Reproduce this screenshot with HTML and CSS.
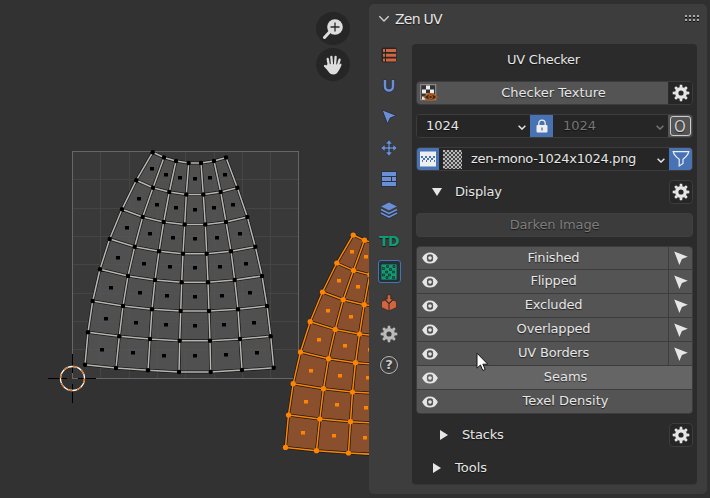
FILE: index.html
```html
<!DOCTYPE html>
<html lang="en">
<head>
<meta charset="utf-8">
<title>Zen UV</title>
<link rel="stylesheet" href="styles.css">
</head>
<body>
<svg class="defs" width="0" height="0">
  <defs>
    <symbol id="gear" viewBox="-10 -10 20 20">
      <g fill="currentColor">
        <path fill-rule="evenodd" d="M0-6A6 6 0 1 1 0 6A6 6 0 1 1 0-6ZM0-2.6A2.6 2.6 0 1 0 0 2.6A2.6 2.6 0 1 0 0-2.6Z"/>
        <path id="tooth" d="M-1.5-5.500L-1.2-8.3H1.2L1.5-5.500Z"/>
        <use href="#tooth" transform="rotate(45)"/><use href="#tooth" transform="rotate(90)"/>
        <use href="#tooth" transform="rotate(135)"/><use href="#tooth" transform="rotate(180)"/>
        <use href="#tooth" transform="rotate(225)"/><use href="#tooth" transform="rotate(270)"/>
        <use href="#tooth" transform="rotate(315)"/>
      </g>
    </symbol>
    <symbol id="eye" viewBox="0 0 16 12">
      <path fill="none" stroke="currentColor" stroke-width="1.8" d="M1.200 6C3 2.500 5.300 1.300 8 1.300S13 2.500 14.800 6C13 9.500 10.700 10.700 8 10.700S3 9.500 1.200 6Z"/>
      <path fill="currentColor" d="M3.800 2.500L5.500 2L4.800 6L5.500 10L3.800 9.500L1 6ZM12.200 2.500L10.500 2L11.200 6L10.500 10L12.200 9.500L15 6Z"/>
      <circle cx="8" cy="6" r="1.800" fill="currentColor"/>
    </symbol>
    <symbol id="arrow" viewBox="0 0 14 14"><path fill="currentColor" d="M.2.400L13.800 5.700L7.900 8L5.400 13.900Z"/></symbol>
    <symbol id="chev" viewBox="0 0 8 5"><path fill="none" stroke="currentColor" stroke-width="1.400" d="M.6.7L4 4.100L7.400.7"/></symbol>
  </defs>
</svg>
<div class="app">
  <main class="editor">
    <svg class="canvas" id="uv" width="369" height="498" viewBox="0 0 369 498"></svg>
    <div class="tools">
      <span class="tool"><svg width="20" height="20" viewBox="0 0 20 20"><path d="M1.500 18.500L7 12.500" stroke="#ddd" stroke-width="3" stroke-linecap="round"/><circle cx="12" cy="8" r="7.800" fill="#ddd"/><path d="M12 3.500V12.500M7.500 8H16.500" stroke="#282828" stroke-width="1.300"/></svg></span>
      <span class="tool"><svg width="20" height="20" viewBox="0 0 20 20"><g fill="none" stroke="#ddd" stroke-linecap="round" stroke-width="2.300"><path d="M6 11L4.700 4M9 10L8.400 2M12 10L12.600 2M14.700 11L16.600 4.700M6.500 15.500L2 11"/></g><path fill="#ddd" d="M4.900 9L15.800 9.500L18 8.500C19.500 9.500 17 13.500 15.500 16Q13.500 19.500 10.500 19.500Q7 19.500 5 16L2 11.500Z"/></svg></span>
    </div>
  </main>
  <aside class="sidebar">
    <header class="head">
      <svg class="fold" width="12" height="8" viewBox="0 0 12 8"><path d="M1.300 1.200L6 6L10.700 1.200" fill="none" stroke="#ccc" stroke-width="1.400"/></svg>
      <span class="head-title">Zen UV</span>
      <svg class="grip" width="15" height="8" viewBox="0 0 15 8"><g fill="#111"><path d="M0 2h2v1h-2zM4 2h2v1h-2zM8 2h2v1h-2zM12 2h2v1h-2zM0 6h2v1h-2zM4 6h2v1h-2zM8 6h2v1h-2zM12 6h2v1h-2z"/></g><path fill="#aaa" d="M0 0h2v2h-2zM4 0h2v2h-2zM8 0h2v2h-2zM12 0h2v2h-2zM0 4h2v2h-2zM4 4h2v2h-2zM8 4h2v2h-2zM12 4h2v2h-2z"/></svg>
    </header>
    <div class="content">
      <nav class="tabs">
        <span class="tab"><svg width="18" height="18" viewBox="0 0 18 18"><rect x="1.500" y="1.500" width="15" height="15" rx="2" fill="#262626"/><path fill="#d0653f" d="M3 3h2v3h-2zM6 3h10v3h-10zM3 7.700h2v3h-2zM6 7.700h10v3h-10zM3 12.500h2v3h-2zM6 12.500h10v3h-10z"/></svg></span>
        <span class="tab"><svg width="18" height="18" viewBox="0 0 18 18"><path d="M5 2.500V9.500A4 4 0 0 0 13 9.500V2.500" fill="none" stroke="#2b303a" stroke-width="4.300"/><path d="M5 3V9.500A4 4 0 0 0 13 9.500V3" fill="none" stroke="#6b8fd6" stroke-width="2.500"/></svg></span>
        <span class="tab"><svg width="18" height="18" viewBox="0 0 18 18"><path d="M2 1.800L16.500 7.500L10.300 10L7.500 16Z" fill="#6b8fd6" stroke="#2b303a"/></svg></span>
        <span class="tab"><svg width="18" height="18" viewBox="0 0 18 18"><g stroke="#2b303a" stroke-width=".7" fill="#6b8fd6"><path d="M9 .8L12.500 5H10V8H13V5.500L17.200 9L13 12.500V10H10V13H12.500L9 17.200L5.500 13H8V10H5V12.500L.8 9L5 5.500V8H8V5H5.500Z"/></g></svg></span>
        <span class="tab"><svg width="18" height="18" viewBox="0 0 18 18"><rect x="1" y="1" width="16" height="16" rx="1" fill="#2b303a"/><path fill="#6b8fd6" d="M2 2h14v4h-14zM2 7h9v4h-9zM12 7h4v4h-4zM2 12h14v4h-14z"/></svg></span>
        <span class="tab"><svg width="18" height="18" viewBox="0 0 18 18"><path d="M9 1.200L17.500 5.500L9 9.800L.5 5.500Z" fill="#6b8fd6" stroke="#2b303a" stroke-width=".5"/><path d="M1 9L9 13L17 9M1 12.300L9 16.300L17 12.300" fill="none" stroke="#2b303a" stroke-width="3"/><path d="M1 8.500L9 12.500L17 8.500M1 12L9 16L17 12" fill="none" stroke="#6b8fd6" stroke-width="1.700"/></svg></span>
        <span class="tab td">TD</span>
        <span class="tab active"><svg width="18" height="18" viewBox="0 0 18 18"><rect x="1" y="1" width="16" height="16" rx="1" fill="#119b74" stroke="#20332e" stroke-width=".8"/><g fill="#4d5c56" stroke="#12382d" stroke-width=".8"><path d="M2.500 4.500h2v2h-2zM6.500 2.500h2v2h-2zM13 2.500h2v2h-2zM9.500 5.500h2v2h-2zM5.500 8h2v2h-2zM12.500 8h2v2h-2zM2.500 11h2v2h-2zM8.500 11h2v2h-2zM6 13.500h2v2h-2zM12.500 13.500h2v2h-2z"/></g></svg></span>
        <span class="tab"><svg width="18" height="18" viewBox="0 0 18 18"><path d="M1.500 7.500L5 6L9 10L13 6L16.500 7.500V13.500L9 17L1.500 13.500Z" fill="#d0653f" stroke="#2d2624" stroke-width=".7"/><path d="M9 10V17" stroke="#2d2624"/><path d="M7.200.8H10.800V5H13.300L9 9.200L4.700 5H7.200Z" fill="#d0653f" stroke="#2d2624" stroke-width=".8"/></svg></span>
        <span class="tab"><svg class="tab-gear" width="20" height="20"><use href="#gear"/></svg></span>
        <span class="tab help"><span class="help-mark">?</span></span>
      </nav>
      <section class="box">
        <div class="title">UV Checker</div>
        <div class="row checker">
          <div class="btn checker-btn">
            <svg class="checker-icon" width="18" height="18" viewBox="0 0 18 18"><rect x=".7" y=".7" width="15" height="15" fill="#333" stroke="#999" stroke-width="1"/><path fill="#eee" d="M6 1.500h4v4h-4zM2 5.500h4v4h-4zM10 5.500h4v4h-4zM6 9.500h4v4h-4zM2 12.500h3v3h-3z"/><path d="M4 13Q10.500 6.500 17.300 13Q10.500 19.500 4 13Z" fill="#342a22" stroke="#b65b1b" stroke-width="1.200"/><circle cx="10.600" cy="13" r="1.800" fill="#333" stroke="#b65b1b" stroke-width="1.200"/></svg>
            <span>Checker Texture</span>
          </div>
          <div class="sq"><svg width="20" height="20"><use href="#gear"/></svg></div>
        </div>
        <div class="row sizes">
          <div class="select first"><span>1024</span><svg width="8" height="5"><use href="#chev"/></svg></div>
          <div class="sq blue"><svg width="12" height="14" viewBox="0 0 12 14"><path d="M2.800 7V4.300A3.200 3.200 0 0 1 9.200 4.300V7" fill="none" stroke="#eee" stroke-width="1.300"/><rect x=".5" y="6" width="11" height="7.500" rx="1" fill="#eee"/><path d="M6 8.500V11.500" stroke="#4772b3" stroke-width="1.300"/></svg></div>
          <div class="select off"><span>1024</span><svg width="8" height="5"><use href="#chev"/></svg></div>
          <div class="letter"><span class="letter-o">O</span></div>
        </div>
        <div class="row image">
          <div class="sq blue img-mode"><svg width="18" height="18" viewBox="0 0 18 18"><rect x="1" y="1.500" width="16" height="15" fill="#eee"/><path fill="#4772b3" d="M2 6h2v2h-2zM6 6h2v2h-2zM10 6h2v2h-2zM14 6h2v2h-2zM4 8h2v2h-2zM8 8h2v2h-2zM12 8h2v2h-2zM3 10h1v2h-1zM7 10h1v2h-1zM11 10h1v2h-1zM15 10h1v2h-1z"/></svg></div>
          <div class="select file"><i class="thumb"></i><span class="filename">zen-mono-1024x1024.png</span><svg width="8" height="5"><use href="#chev"/></svg></div>
          <div class="sq blue filter"><svg width="18" height="18" viewBox="0 0 18 18"><path d="M1.200 1.700H16.800Q16 5.500 11 9.300V13.500L7.200 16V9.300Q2 5.500 1.200 1.700Z" fill="none" stroke="#eee" stroke-width="1.200"/></svg></div>
        </div>
        <div class="sub display"><i class="tri down"></i><span>Display</span><div class="sq outlined"><svg width="20" height="20"><use href="#gear"/></svg></div></div>
        <div class="darken">Darken Image</div>
        <div class="list" id="list">
          <div class="item"><svg class="eye" width="16" height="12"><use href="#eye"/></svg><span class="label">Finished</span><span class="pick"><svg width="14" height="14"><use href="#arrow"/></svg></span></div>
          <div class="item"><svg class="eye" width="16" height="12"><use href="#eye"/></svg><span class="label">Flipped</span><span class="pick"><svg width="14" height="14"><use href="#arrow"/></svg></span></div>
          <div class="item"><svg class="eye" width="16" height="12"><use href="#eye"/></svg><span class="label">Excluded</span><span class="pick"><svg width="14" height="14"><use href="#arrow"/></svg></span></div>
          <div class="item"><svg class="eye" width="16" height="12"><use href="#eye"/></svg><span class="label">Overlapped</span><span class="pick"><svg width="14" height="14"><use href="#arrow"/></svg></span></div>
          <div class="item"><svg class="eye" width="16" height="12"><use href="#eye"/></svg><span class="label">UV Borders</span><span class="pick"><svg width="14" height="14"><use href="#arrow"/></svg></span></div>
          <div class="item hover"><svg class="eye" width="16" height="12"><use href="#eye"/></svg><span class="label">Seams</span></div>
          <div class="item"><svg class="eye" width="16" height="12"><use href="#eye"/></svg><span class="label">Texel Density</span></div>
        </div>
        <div class="sub stacks"><i class="tri right"></i><span>Stacks</span><div class="sq outlined"><svg width="20" height="20"><use href="#gear"/></svg></div></div>
        <div class="sub tools-sub"><i class="tri right"></i><span>Tools</span></div>
      </section>
    </div>
  </aside>
</div>
<svg class="cursor" width="13" height="20" viewBox="0 0 13 20"><path d="M1 1.200V16.200L4.500 13L6.800 18.500L9.200 17.500L6.900 12.200H11.800Z" fill="#fff" stroke="#151515"/></svg>
<script src="mesh.js"></script>
</body>
</html>
```
FILE: styles.css
```css
* { box-sizing: border-box; }
html, body { margin: 0; height: 100%; overflow: hidden; }
body { background: #303030; color: #e6e6e6; font: 13px/16px "DejaVu Sans", sans-serif; text-shadow: 0 1px 1px rgba(0,0,0,.6); }
svg { display: block; flex: none; }
.defs { position: absolute; }
.app { display: flex; width: 710px; height: 498px; }
.editor { position: relative; width: 369px; background: #323232; }
.canvas { display: block; }
.tools { position: absolute; left: 316px; top: 12px; display: grid; gap: 3px; }
.tool { width: 34px; height: 33px; border-radius: 50%; background: #262626; display: grid; place-items: center; }

.sidebar { width: 338px; height: 490px; margin-top: 4px; background: #3d3d3d; border-radius: 5px; }
.head { height: 40px; display: flex; align-items: flex-start; padding: 7px 7px 0 9px; }
.fold { margin-top: 4px; }
.head-title { margin-left: 5px; font-size: 14px; letter-spacing: -.75px; }
.grip { margin: 4px 0 0 auto; }
.content { display: flex; }
.tabs { width: 43px; display: flex; flex-direction: column; align-items: center; padding-right: 3px; margin-top: -5px; }
.tab { width: 24px; height: 31px; display: grid; place-items: center; }
.td { font-weight: 700; font-size: 14px; letter-spacing: -.8px; color: #119b74; }
.active { height: 23px; width: 23px; margin: 4px 0; border: 1.500px solid #4772b3; border-radius: 3px; background: #282f38; }
.tab-gear { color: #bbb; }
.help-mark { width: 18px; height: 18px; border: 1.500px solid #bbb; border-radius: 50%; color: #ccc; font: 700 13px/16px "DejaVu Sans", sans-serif; text-align: center; box-shadow: 0 0 1px #111; }

.box { width: 285px; height: 440px; padding: 0 4px; background: #2b2b2b; border-radius: 4px; box-shadow: 0 1px 0 #353535; }
.title { height: 37px; padding: 8px 0 0 0; text-align: center; text-indent: -22px; letter-spacing: -.25px; }
.row { display: flex; width: 277px; height: 24px; border: 1px solid #3c3c3c; border-radius: 4px; overflow: hidden; }
.row + .row { margin-top: 9px; }
.sq { width: 23px; display: grid; place-items: center; flex: none; background: #262626; }
.btn { position: relative; flex: 1; background: #545454; text-align: center; line-height: 22px; margin-right: 1px; padding-left: 22px; }
.checker-icon { position: absolute; left: 3px; top: 2px; }
.select { display: flex; align-items: center; justify-content: space-between; background: #262626; }
.first { width: 113px; padding: 0 4px 0 9px; }
.blue { background: #4772b3; }
.off { width: 115px; padding: 0 4px 0 10px; color: #777; }
.select svg { margin-top: 2px; }
.letter { width: 24px; display: grid; place-items: center; background: #545454; }
.letter-o { width: 21px; height: 20px; border: 1px solid #ccc; border-radius: 3px; text-align: center; font-size: 15px; line-height: 20px; color: #ccc; }
.img-mode { width: 22px; }
.file { width: 230px; padding: 0 4px; }
.thumb { width: 19px; height: 19px; background: repeating-conic-gradient(#444 0 25%, #bbb 0 50%) 0 0 / 4px 4px; }
.filename { flex: 1; margin-left: 9px; letter-spacing: -.33px; }
.sub { display: flex; align-items: center; width: 277px; height: 24px; }
.sub .sq { margin-left: auto; }
.outlined { width: 24px; height: 24px; border: 1px solid #3c3c3c; border-radius: 4px; }
.tri { width: 12px; display: block; }
.tri::before { content: ""; display: block; background: #e6e6e6; }
.down::before { width: 10px; height: 8px; clip-path: polygon(0 0, 100% 0, 50% 100%); }
.right::before { width: 8px; height: 10px; clip-path: polygon(0 0, 100% 50%, 0 100%); }
.display { margin-top: 9px; padding-left: 16px; letter-spacing: -.15px; }
.display .tri { margin-right: 11px; }
.darken { height: 24px; margin-top: 9px; width: 277px; border: 1px solid #3f3f3f; border-radius: 4px; background: #3c3c3c; color: #7e7e7e; text-align: center; line-height: 22px; letter-spacing: -.15px; }
.list { margin-top: 9px; width: 277px; border: 1px solid #3c3c3c; border-radius: 4px; overflow: hidden; background: #3c3c3c; display: grid; gap: 1px; }
.item { height: 23px; display: flex; align-items: center; background: #545454; }
.item:first-child { height: 22px; }
.eye { margin-left: 5px; }
.label { flex: 1; text-align: center; letter-spacing: -.18px; padding: 0 0 1px 1px; }
.label:last-child { letter-spacing: 0; }
.pick { width: 24px; align-self: stretch; border-left: 1px solid #3c3c3c; display: grid; place-items: center; }
.hover { background: #656565; }
.stacks { margin-top: 9px; padding-left: 24px; letter-spacing: -.2px; }
.stacks .tri { margin-right: 10px; }
.tools-sub { margin-top: 9px; padding-left: 17px; }
.tools-sub .tri { margin-right: 10px; }
.cursor { position: absolute; left: 476px; top: 352px; }

.grid-bg { fill: #393939; }
.grid-line { stroke: #454545; }
.grid-frame { fill: none; stroke: #666; }
.face { fill: #585858; fill-opacity: .75; }
.edge-back { fill: none; stroke: #181818; stroke-width: 3; }
.edge { fill: none; stroke: #b9b5b1; stroke-width: 1.500; }
.vert { fill: #000; }
.selected .face { fill: #8a4f2c; fill-opacity: 1; }
.selected .edge { stroke: #ff8500; }
.selected .vert { fill: #ff8500; }
.axis { stroke: #000; }
.ring-a { fill: none; stroke: #fff; stroke-width: 1.300; }
.ring-b { fill: none; stroke: #e0721a; stroke-width: 1.300; stroke-dasharray: 4.700 4.700; }
```
FILE: mesh.js
```js
const rows = [
  [[152.7,152.3],[164,157.5],[176,161],[188.7,163],[201,163],[214,161],[226,157.5]],
  [[136.3,180.3],[153,187.7],[169.3,192],[186.3,194.5],[203.3,194.5],[220.7,192],[237.3,187.7]],
  [[122,209.3],[142.7,217],[163.7,222],[184.7,224.5],[205.3,224.5],[226,222],[247.3,217]],
  [[109.7,239],[134.7,246.7],[159,251.3],[183,253.7],[206.7,253.7],[231,251.3],[255.3,246.7]],
  [[100,269.3],[128,276],[155,280],[181.7,282.3],[208,282.3],[234.7,280],[262,276]],
  [[92.7,301],[123,306],[152,309.3],[180.7,311],[209,311],[238,309.3],[267,306]],
  [[88,332.3],[119.3,336.3],[150,339],[179.7,340.7],[210,340.7],[240,339],[270.7,336.3]],
  [[85,364.7],[116,368],[148,370.3],[179,372],[210.7,372],[242,370],[273.7,367.7]]
];
const line = pts => 'M' + pts.map(p => p.join(' ')).join('L');
const columns = rows[0].map((_, c) => rows.map(r => r[c]));
const outline = [...rows[0], ...columns[6], ...[...rows[7]].reverse(), ...[...columns[0]].reverse()];
const wires = [...rows, ...columns].map(line).join('');

function mesh(cls, dx, dy, round) {
  let s = `<g class="${cls}" transform="translate(${dx} ${dy})"><path class="face" d="${line(outline)}Z"/>`;
  s += `<path class="edge-back" d="${wires}"/><path class="edge" d="${wires}"/>`;
  rows.flat().forEach(([x, y]) => {
    s += `<circle class="vert" cx="${x}" cy="${y}" r="${round}"/>`;
  });
  for (let r = 0; r < 7; r++) {
    for (let c = 0; c < 6; c++) {
      const q = [rows[r][c], rows[r][c + 1], rows[r + 1][c], rows[r + 1][c + 1]];
      const x = Math.round(q.reduce((a, p) => a + p[0], 0) / 4 + dx) - dx;
      const y = Math.round(q.reduce((a, p) => a + p[1], 0) / 4 + dy) - dy;
      s += `<rect class="vert" x="${x - 2}" y="${y - 2}" width="4" height="3.500"/>`;
    }
  }
  return s + '</g>';
}

let out = '<rect class="grid-bg" x="72.5" y="151.5" width="226" height="227"/>';
for (let i = 1; i < 8; i++) {
  const x = Math.round(72 + i * 28.3) + 0.5;
  const y = Math.round(151 + i * 28.3) + 0.5;
  out += `<path class="grid-line" d="M${x} 152V378M73 ${y}H298"/>`;
}
out += '<rect class="grid-frame" x="72.5" y="151.5" width="226" height="227"/>';
out += mesh('plain', 0, 0, 2.2);
out += mesh('selected', 200.5, 82.7, 2.6);
out += '<path class="axis" d="M48 378.5H67M78 378.5H96M72.5 354V373M72.5 384V403"/>';
out += '<circle class="ring-a" cx="72.5" cy="378.500" r="12"/><circle class="ring-b" cx="72.5" cy="378.500" r="12"/>';
document.getElementById('uv').innerHTML = out;
```
